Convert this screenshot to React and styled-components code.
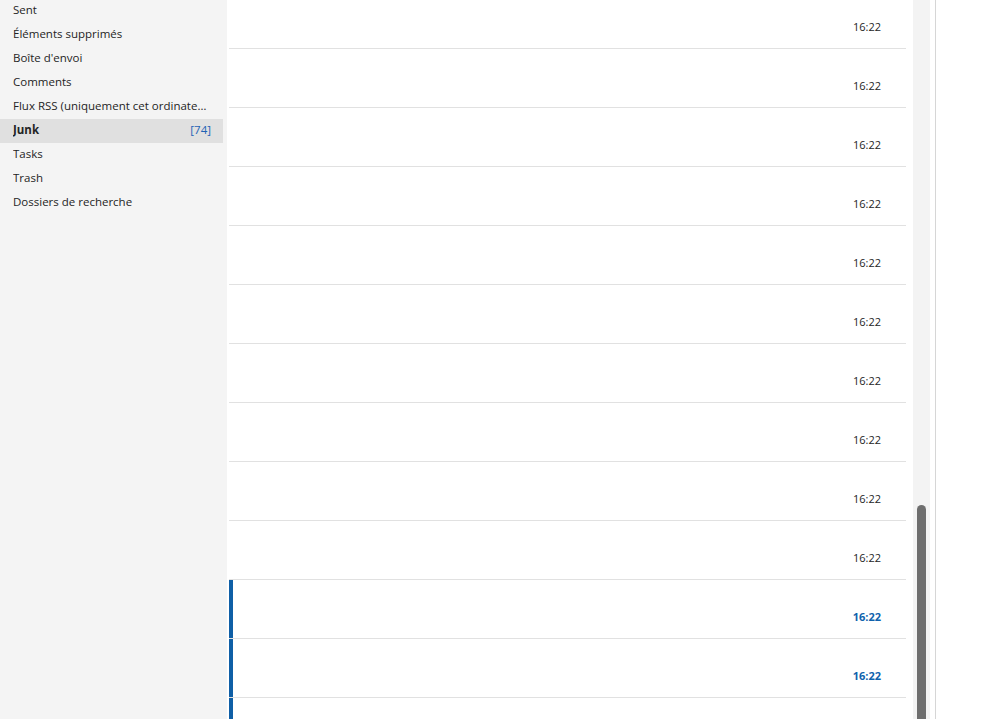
import styled, { createGlobalStyle } from 'styled-components'

const GlobalStyle = createGlobalStyle`
   html, body {
      margin: 0;
      padding: 0;
      height: 100%;
      overflow: hidden;
      background: #ffffff;
   }
   body {
      font-family: "Segoe UI", "Open Sans", "Noto Sans", sans-serif;
      color: #242424;
   }
`

const Shell = styled.div`
   display: flex;
   height: 719px;
   overflow: hidden;
`

//왼쪽 폴더 목록
const Sidebar = styled.nav`
   width: 227px;
   flex-shrink: 0;
   background: #f4f4f4;
`

const FolderList = styled.ul`
   list-style: none;
   margin: -1px 0 0;
   padding: 0;
   width: 223px;
`

const FolderItem = styled.li`
   display: flex;
   align-items: center;
   height: 24px;
   padding: 0 12px 3px 13px;
   box-sizing: border-box;
   font-size: 11.5px;
   font-weight: ${(props) => (props.active ? 700 : 400)};
   background: ${(props) => (props.active ? '#e0e0e0' : 'transparent')};
   color: #242424;
`

const FolderName = styled.span`
   flex: 1;
   min-width: 0;
   white-space: nowrap;
   overflow: hidden;
   text-overflow: ellipsis;
`

const Count = styled.span`
   margin-left: 8px;
   font-weight: 400;
   color: #1f63b5;
`

//메일 목록
const MessagePane = styled.main`
   flex: 1;
   display: flex;
   min-width: 0;
`

const MessageList = styled.div`
   width: 677px;
   margin-left: 2px;
   margin-top: -10px;
`

//읽지 않은 메일은 왼쪽에 파란 막대
const Row = styled.div`
   display: flex;
   align-items: flex-end;
   justify-content: flex-end;
   height: 59px;
   padding: 0 25px 13px 0;
   box-sizing: border-box;
   border-bottom: 1px solid #e1e1e1;
   box-shadow: ${(props) => (props.unread ? 'inset 4px 0 0 #0f5fa6' : 'none')};
`

const Time = styled.span`
   font-size: 11px;
   line-height: 16px;
   font-weight: ${(props) => (props.unread ? 700 : 400)};
   color: ${(props) => (props.unread ? '#0f62ad' : '#242424')};
`

const ScrollTrack = styled.div`
   width: 17px;
   margin-left: 7px;
   background: #f3f3f3;
   display: flex;
   flex-direction: column;
   align-items: center;
   padding-top: 505px;
   box-sizing: border-box;
`

const ScrollThumb = styled.div`
   width: 9px;
   flex: 1;
   margin-bottom: -10px;
   border-radius: 5px;
   background: #6e6e6e;
`

const Divider = styled.div`
   width: 1px;
   margin-left: 5px;
   background: #d6d6d6;
`

const ReadingPane = styled.div`
   flex: 1;
   background: #ffffff;
`

const folders = [
   { name: 'Sent' },
   { name: 'Éléments supprimés' },
   { name: "Boîte d'envoi" },
   { name: 'Comments' },
   { name: 'Flux RSS (uniquement cet ordinateur)' },
   { name: 'Junk', count: 74, active: true },
   { name: 'Tasks' },
   { name: 'Trash' },
   { name: 'Dossiers de recherche' },
]

const messages = Array.from({ length: 13 }, (_, i) => ({
   time: '16:22',
   unread: i >= 10,
}))

function App() {
   return (
      <>
         <GlobalStyle />
         <Shell>
            <Sidebar>
               <FolderList>
                  {folders.map((f) => (
                     <FolderItem key={f.name} active={f.active}>
                        <FolderName>{f.name}</FolderName>
                        {f.count && <Count>[{f.count}]</Count>}
                     </FolderItem>
                  ))}
               </FolderList>
            </Sidebar>
            <MessagePane>
               <MessageList>
                  {messages.map((m, i) => (
                     <Row key={i} unread={m.unread}>
                        <Time unread={m.unread}>{m.time}</Time>
                     </Row>
                  ))}
               </MessageList>
               <ScrollTrack>
                  <ScrollThumb />
               </ScrollTrack>
               <Divider />
               <ReadingPane />
            </MessagePane>
         </Shell>
      </>
   )
}

export default App
